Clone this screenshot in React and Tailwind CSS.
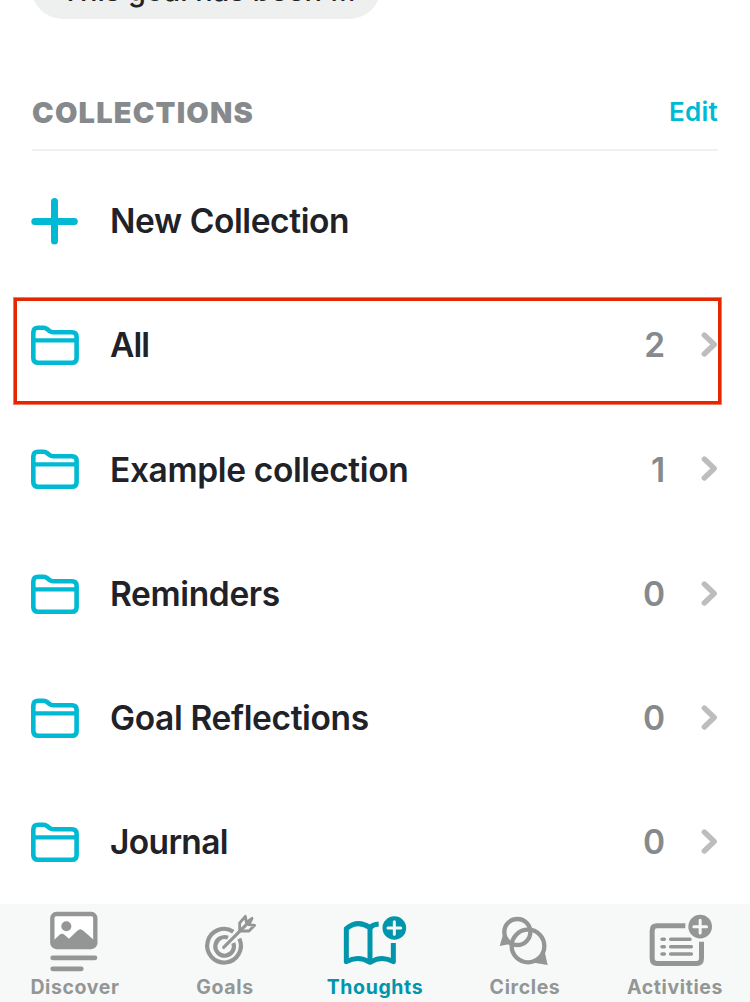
import React from "react";

const collections = [
  { name: "All", count: 2, track: "tracking-[-0.9px]" },
  { name: "Example collection", count: 1, track: "tracking-[-0.36px]" },
  { name: "Reminders", count: 0, track: "tracking-[-0.36px]" },
  { name: "Goal Reflections", count: 0, track: "tracking-[-0.36px]" },
  { name: "Journal", count: 0, track: "tracking-[-0.65px]" },
];

function PlusIcon() {
  return (
    <svg className="h-[48px] w-[48px] text-[#00b9d3]" viewBox="0 0 48 48" fill="none" stroke="currentColor" strokeWidth="7" strokeLinecap="round">
      <path d="M23.5 4.6v39.5M3.8 24.4h39.5" />
    </svg>
  );
}

function FolderIcon() {
  return (
    <svg className="h-[40px] w-[48px] text-[#00b9d3]" viewBox="0 0 48 40" fill="none" stroke="currentColor" strokeWidth="4.6" strokeLinejoin="round">
      <path d="M2.3 33V7.4Q2.3 2.8 7 2.8H12.6Q14.6 2.8 16.2 4.1L18.5 6Q20 7.2 22 7.2H41Q45.6 7.2 45.6 11.8V33.2Q45.6 37.7 41 37.7H7Q2.3 37.7 2.3 33Z" />
      <path d="M2.3 15.4H45.6" strokeWidth="4.2" />
    </svg>
  );
}

function Chevron() {
  return (
    <svg className="h-[26px] w-[17px] text-[#bdbdbd]" viewBox="0 0 17 26" fill="none" stroke="currentColor" strokeWidth="5.4" strokeLinecap="round" strokeLinejoin="round">
      <path d="M3.3 3L13.2 12.5L3.3 22" />
    </svg>
  );
}

function DiscoverIcon() {
  return (
    <svg className="h-[64px] w-[80px]" viewBox="105 39 240 192" fill="none" stroke="currentColor">
      <rect x="157" y="57" width="129" height="99" rx="12" strokeWidth="13" fill="#fff" />
      <circle cx="199" cy="94" r="15" fill="currentColor" stroke="none" />
      <path d="M158 139L178 120Q186 112 194 120L207 131L232 107Q241 98 250 107L286 139V156H158Z" fill="currentColor" stroke="none" />
      <path d="M158 188.500H285M158 221.500H244" strokeWidth="14" strokeLinecap="round" />
    </svg>
  );
}

function GoalsIcon() {
  return (
    <svg className="h-[64px] w-[80px]" viewBox="45 39 240 192" fill="none" stroke="currentColor" strokeWidth="12.500">
      <path d="M190 110A50.500 50.500 0 1 0 208 131" />
      <path d="M174 128A28 28 0 1 0 190 144" />
      <path d="M161 157L232 86" strokeWidth="9.500" strokeLinecap="round" />
      <path d="M209 108V84L226 64L229 82L246 70L237 89L254 91L237 108Z" strokeWidth="8.500" strokeLinejoin="round" />
    </svg>
  );
}

function ThoughtsIcon() {
  return (
    <svg className="h-[64px] w-[80px]" viewBox="75 39 240 192" fill="none" stroke="currentColor" strokeWidth="15">
      <path d="M109 200V101Q143 72 180 98V202Q144 180 109 200Z" strokeLinejoin="round" />
      <path d="M180 98Q190 88 206 87" />
      <path d="M180 202Q216 180 250 200V144" strokeLinejoin="round" />
      <circle cx="253" cy="99" r="35.500" fill="currentColor" stroke="none" />
      <path d="M253 80V118M234 99H272" stroke="#f7f9f9" strokeWidth="9" strokeLinecap="round" />
    </svg>
  );
}

function CirclesIcon() {
  return (
    <svg className="h-[64px] w-[80px]" viewBox="60 39 240 192" fill="none" stroke="currentColor" strokeWidth="13">
      <circle cx="157" cy="111" r="39" />
      <circle cx="189" cy="153" r="49" />
      <path d="M114 119L104 153L143 145L127 132Z" fill="currentColor" stroke="none" />
      <path d="M239 170L248 210L207 203L215 191Z" fill="currentColor" stroke="none" />
    </svg>
  );
}

function ActivitiesIcon() {
  return (
    <svg className="h-[64px] w-[80px]" viewBox="75 39 240 192" fill="none" stroke="currentColor">
      <path d="M226 92.500H141Q126.500 92.500 126.500 107V190Q126.500 205.500 141 205.500H260Q274.500 205.500 274.500 190V140" strokeWidth="15" />
      <path d="M156 133H163M156 155H163M156 177H163M182 133H240M182 155H244M182 177H244" strokeWidth="10.500" strokeLinecap="round" />
      <circle cx="270.500" cy="95" r="35.500" fill="currentColor" stroke="none" />
      <path d="M270.500 76V114M251.500 95H289.500" stroke="#f7f9f9" strokeWidth="9" strokeLinecap="round" />
    </svg>
  );
}

const tabs = [
  { label: "Discover", Icon: DiscoverIcon },
  { label: "Goals", Icon: GoalsIcon },
  { label: "Thoughts", Icon: ThoughtsIcon, active: true },
  { label: "Circles", Icon: CirclesIcon },
  { label: "Activities", Icon: ActivitiesIcon },
];

export default function App() {
  return (
    <div className="flex h-[1002px] w-[750px] flex-col overflow-hidden bg-white font-['Inter','Liberation_Sans',sans-serif]">
      <div className="flex h-[19px] shrink-0 items-end overflow-hidden pl-[31px]">
        <div className="flex h-[76px] w-[350px] shrink-0 items-end rounded-[32px] bg-[#eef0f0] pb-[11px] pl-[30px] text-[29px] leading-[34px] font-medium whitespace-nowrap text-[#202227]">
          This goal has been ...
        </div>
      </div>

      <header className="mt-[71px] ml-8 flex h-[61px] w-[686px] shrink-0 items-start justify-between border-b-2 border-[#eff0f1]">
        <h2 className="text-[29px] leading-[45px] font-black tracking-[1.2px] text-[#868a8d]">COLLECTIONS</h2>
        <button className="text-[26px] leading-[44px] font-semibold tracking-[0.25px] text-[#00b9d3]">Edit</button>
      </header>

      <main className="flex h-[753px] shrink-0 flex-col pt-[7.8px]">
        <div className="flex h-[124.300px] shrink-0 items-center pl-[31px]">
          <PlusIcon />
          <span className="mt-[1.6px] ml-[31px] text-[33.500px] leading-[51px] font-semibold tracking-[-0.4px] text-[#202227]">New Collection</span>
        </div>
        {collections.map((c, i) => (
          <div key={c.name} className="relative flex h-[124.200px] shrink-0 items-center pr-[32px] pl-[31px]">
            <FolderIcon />
            <span className={"mt-[1.6px] ml-[31px] flex-1 text-[33.500px] leading-[51px] font-semibold text-[#202227] " + c.track}>{c.name}</span>
            <span className="mt-[1.6px] mr-[36.5px] text-[33.500px] leading-[51px] font-semibold tracking-[-0.6px] text-[#868a8d]">{c.count}</span>
            <Chevron />
            {i === 0 && (
              <div className="absolute top-[14px] left-[13px] h-[108px] w-[709px] border border-[#f07a62]">
                <div className="h-full w-full border-[3px] border-[#e52600]" />
              </div>
            )}
          </div>
        ))}
      </main>

      <nav className="grid h-[98px] shrink-0 grid-cols-5 bg-[#f7f9f9]">
        {tabs.map(({ label, Icon, active }) => (
          <div key={label} className={"flex flex-col items-center pt-1 " + (active ? "text-[#0095ab]" : "text-[#939695]")}>
            <Icon />
            <span className="text-[19.500px] leading-[30px] font-bold tracking-[0.62px]">{label}</span>
          </div>
        ))}
      </nav>
    </div>
  );
}
